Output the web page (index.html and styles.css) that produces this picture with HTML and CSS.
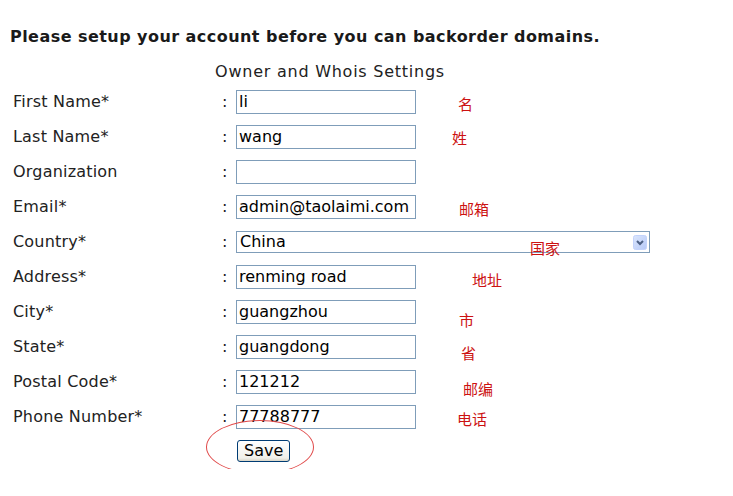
FILE: index.html
```html
<!DOCTYPE html>
<html lang="en">
<head>
    <meta charset="UTF-8">
    <title>Account Setup</title>
    <link rel="stylesheet" href="styles.css">
</head>
<body>
    <h3 class="notice">Please setup your account before you can backorder domains.</h3>

    <form class="account-form">
        <table class="whois-table">
            <caption>Owner and Whois Settings</caption>
            <tr>
                <td class="label">First Name*</td>
                <td class="colon">:</td>
                <td class="field"><input type="text" value="li"></td>
            </tr>
            <tr>
                <td class="label">Last Name*</td>
                <td class="colon">:</td>
                <td class="field"><input type="text" value="wang"></td>
            </tr>
            <tr>
                <td class="label">Organization</td>
                <td class="colon">:</td>
                <td class="field"><input type="text" value=""></td>
            </tr>
            <tr>
                <td class="label">Email*</td>
                <td class="colon">:</td>
                <td class="field"><input type="text" value="admin@taolaimi.com"></td>
            </tr>
            <tr>
                <td class="label">Country*</td>
                <td class="colon">:</td>
                <td class="field">
                    <div class="select-wrap">
                        <select>
                            <option>China</option>
                        </select>
                        <svg class="select-btn" width="14" height="15" viewBox="0 0 14 15">
                            <defs>
                                <linearGradient id="btnGrad" x1="0" y1="0" x2="1" y2="1">
                                    <stop offset="0" stop-color="#dbe6fd"/>
                                    <stop offset="1" stop-color="#b6c9f7"/>
                                </linearGradient>
                            </defs>
                            <rect x="0.5" y="0.5" width="13" height="14" rx="2" fill="url(#btnGrad)" stroke="#c3d3fb"/>
                            <path d="M4 6 L7 9 L10 6" fill="none" stroke="#4d6185" stroke-width="2"/>
                        </svg>
                    </div>
                </td>
            </tr>
            <tr>
                <td class="label">Address*</td>
                <td class="colon">:</td>
                <td class="field"><input type="text" value="renming road"></td>
            </tr>
            <tr>
                <td class="label">City*</td>
                <td class="colon">:</td>
                <td class="field"><input type="text" value="guangzhou"></td>
            </tr>
            <tr>
                <td class="label">State*</td>
                <td class="colon">:</td>
                <td class="field"><input type="text" value="guangdong"></td>
            </tr>
            <tr>
                <td class="label">Postal Code*</td>
                <td class="colon">:</td>
                <td class="field"><input type="text" value="121212"></td>
            </tr>
            <tr>
                <td class="label">Phone Number*</td>
                <td class="colon">:</td>
                <td class="field"><input type="text" value="77788777"></td>
            </tr>
            <tr>
                <td></td>
                <td></td>
                <td class="field"><button type="button" class="save-btn">Save</button></td>
            </tr>
        </table>

        <!-- notas en rojo -->
        <span class="note note-first">名</span>
        <span class="note note-last">姓</span>
        <span class="note note-email">邮箱</span>
        <span class="note note-country">国家</span>
        <span class="note note-address">地址</span>
        <span class="note note-city">市</span>
        <span class="note note-state">省</span>
        <span class="note note-postal">邮编</span>
        <span class="note note-phone">电话</span>
        <span class="save-circle"></span>
    </form>
</body>
</html>
```

FILE: styles.css
```css
body {
    margin: 0;
    background: #fff;
    color: #222;
    font-family: "DejaVu Sans", Verdana, sans-serif;
}
.notice {
    margin: 28px 0 0 10px;
    font-size: 16px;
    line-height: 18px;
    letter-spacing: 0.45px;
    font-weight: bold;
    color: #1a1a1a;
}
.account-form {
    position: relative;
    margin: 16px 0 0 10px;
}
.whois-table {
    width: 640px;
    border-collapse: collapse;
    font-size: 16px;
    color: #222;
}
.whois-table caption {
    line-height: 19px;
    padding-bottom: 3px;
    font-size: 16px;
    letter-spacing: 0.75px;
}
.whois-table td {
    height: 35px;
    padding: 0;
    vertical-align: middle;
}
.label {
    width: 206px;
    padding-left: 3px !important;
    letter-spacing: 0.2px;
}
.colon {
    width: 14px;
    padding-left: 3px !important;
}
.field input {
    box-sizing: border-box;
    width: 180px;
    height: 24px;
    margin: 0;
    padding: 0 2px;
    border: 1px solid #7f9db9;
    font-family: "DejaVu Sans", Verdana, sans-serif;
    font-size: 16px;
    color: #000;
}
.select-wrap {
    position: relative;
    width: 414px;
}
.select-wrap select {
    -webkit-appearance: none;
    appearance: none;
    box-sizing: border-box;
    display: block;
    width: 414px;
    height: 22px;
    margin: 0;
    padding: 0 3px;
    border: 1px solid #7f9db9;
    border-radius: 0;
    background: #fff;
    font-family: "DejaVu Sans", Verdana, sans-serif;
    font-size: 16px;
    color: #000;
}
.select-btn {
    position: absolute;
    right: 3px;
    top: 4px;
}
.save-btn {
    margin: -3px 0 0 1px;
    padding: 1px 6px;
    height: 22px;
    border: 1px solid #003c74;
    border-radius: 3px;
    background: linear-gradient(#ffffff, #f0f0ea 85%, #d8d4c6);
    font-family: "DejaVu Sans", Verdana, sans-serif;
    font-size: 16px;
    line-height: 18px;
    color: #000;
}
/* notas */
.note {
    position: absolute;
    color: #cc1111;
    font-family: "Noto Sans CJK SC", sans-serif;
    font-size: 15px;
    line-height: 16px;
}
.note-first   { left: 448px; top: 34px; }
.note-last    { left: 442px; top: 68px; }
.note-email   { left: 449px; top: 139px; }
.note-country { left: 520px; top: 178px; }
.note-address { left: 462px; top: 210px; }
.note-city    { left: 449px; top: 250px; }
.note-state   { left: 451px; top: 283px; }
.note-postal  { left: 453px; top: 319px; }
.note-phone   { left: 447px; top: 349px; }
.save-circle {
    position: absolute;
    left: 196px;
    top: 358px;
    width: 106px;
    height: 52px;
    border: 1px solid #e04848;
    border-radius: 50%;
}
```
